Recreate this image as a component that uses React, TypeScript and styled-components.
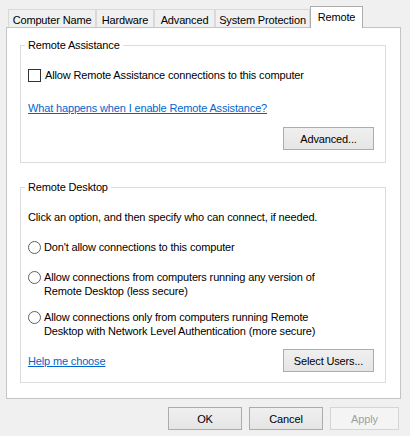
import React from 'react';
import styled, { createGlobalStyle } from 'styled-components';

const GlobalStyle = createGlobalStyle`
  html, body {
    margin: 0;
    padding: 0;
    background: #f0f0f0;
  }
  body {
    font-family: 'Liberation Sans', Arial, sans-serif;
    font-size: 11px;
    letter-spacing: -0.15px;
    color: #000;
  }
`;

const Dialog = styled.div`
  width: 410px;
  height: 436px;
  box-sizing: border-box;
  padding: 6px 9px 0 6px;
  display: flex;
  flex-direction: column;
`;

const TabStrip = styled.div`
  display: flex;
  align-items: flex-end;
  height: 21px;
  padding-left: 2px;
`;

const Tab = styled.div<{ $active?: boolean; $width: number }>`
  box-sizing: border-box;
  width: ${p => p.$width}px;
  height: ${p => (p.$active ? 22 : 18)}px;
  margin-bottom: ${p => (p.$active ? -1 : 0)}px;
  padding: ${p => (p.$active ? '0 0 2px' : '2px 0 0')};
  border: 1px solid ${p => (p.$active ? '#acacac' : '#d9d9d9')};
  border-bottom: none;
  background: ${p => (p.$active ? '#fff' : '#f0f0f0')};
  position: relative;
  z-index: ${p => (p.$active ? 1 : 0)};
  display: flex;
  align-items: center;
  justify-content: center;
  white-space: nowrap;
`;

const Panel = styled.div`
  box-sizing: border-box;
  width: 395px;
  height: 372px;
  border: 1px solid #c4c4c4;
  background: #fff;
  padding: 10px 14px 0 13px;
`;

const Group = styled.fieldset`
  margin: 0;
  min-width: 0;
  border: 1px solid #dcdcdc;
  padding: 16px 11px 12px 7px;

  & + & {
    margin-top: 17px;
    padding-bottom: 10px;
  }
`;

const Legend = styled.legend`
  padding: 0 3px;
  margin-left: -3px;
  line-height: 14px;
`;

const CheckRow = styled.label`
  display: flex;
  align-items: center;
  gap: 4px;
  line-height: 14px;
`;

const CheckBox = styled.span`
  box-sizing: border-box;
  width: 13px;
  height: 13px;
  border: 1px solid #333;
  background: #fff;
  flex: none;
`;

const Link = styled.a<{ $gap?: number }>`
  display: block;
  margin-top: ${p => p.$gap ?? 0}px;
  line-height: 14px;
  color: #0066cc;
  text-decoration: underline;
  cursor: pointer;
`;

const Text = styled.div`
  line-height: 14px;
`;

const RadioRow = styled.label<{ $gap: number }>`
  display: flex;
  align-items: flex-start;
  gap: 3px;
  margin-top: ${p => p.$gap}px;
  line-height: 14px;
`;

const Radio = styled.span`
  box-sizing: border-box;
  width: 13px;
  height: 13px;
  margin-top: 1px;
  border-radius: 50%;
  border: 1px solid #5f5f5f;
  background: #fff;
  flex: none;
`;

const ActionRow = styled.div<{ $gap: number; $split?: boolean }>`
  display: flex;
  align-items: center;
  justify-content: ${p => (p.$split ? 'space-between' : 'flex-end')};
  margin-top: ${p => p.$gap}px;
`;

const Button = styled.button<{ $width: number }>`
  box-sizing: border-box;
  width: ${p => p.$width}px;
  height: 23px;
  padding: 0;
  border: 1px solid #acacac;
  border-radius: 0;
  background: linear-gradient(#f0f0f0, #e5e5e5);
  font-family: inherit;
  font-size: 11px;
  letter-spacing: inherit;
  color: #000;

  &:disabled {
    border-color: #d5d5d5;
    background: #f4f4f4;
    color: #a0a0a0;
  }
`;

const ButtonBar = styled.div`
  display: flex;
  justify-content: flex-end;
  gap: 7px;
  margin-top: 8px;
  padding-right: 2px;
`;

const tabs = [
  { label: 'Computer Name', width: 88 },
  { label: 'Hardware', width: 58 },
  { label: 'Advanced', width: 61 },
  { label: 'System Protection', width: 95 },
  { label: 'Remote', width: 53, active: true },
];

const App: React.FC = () => {
  return (
    <Dialog>
      <GlobalStyle />
      <TabStrip>
        {tabs.map(t => (
          <Tab key={t.label} $width={t.width} $active={t.active}>
            {t.label}
          </Tab>
        ))}
      </TabStrip>
      <Panel>
        <Group>
          <Legend>Remote Assistance</Legend>
          <CheckRow>
            <CheckBox />
            <span>Allow Remote Assistance connections to this computer</span>
          </CheckRow>
          <Link $gap={19}>What happens when I enable Remote Assistance?</Link>
          <ActionRow $gap={12}>
            <Button $width={91}>Advanced...</Button>
          </ActionRow>
        </Group>
        <Group>
          <Legend>Remote Desktop</Legend>
          <Text>Click an option, and then specify who can connect, if needed.</Text>
          <RadioRow $gap={16}>
            <Radio />
            <span>Don't allow connections to this computer</span>
          </RadioRow>
          <RadioRow $gap={16}>
            <Radio />
            <span>
              Allow connections from computers running any version of
              <br />
              Remote Desktop (less secure)
            </span>
          </RadioRow>
          <RadioRow $gap={12}>
            <Radio />
            <span>
              Allow connections only from computers running Remote
              <br />
              Desktop with Network Level Authentication (more secure)
            </span>
          </RadioRow>
          <ActionRow $gap={11} $split>
            <Link>Help me choose</Link>
            <Button $width={91}>Select Users...</Button>
          </ActionRow>
        </Group>
      </Panel>
      <ButtonBar>
        <Button $width={74}>OK</Button>
        <Button $width={74}>Cancel</Button>
        <Button $width={69} disabled>
          Apply
        </Button>
      </ButtonBar>
    </Dialog>
  );
};

export default App;
